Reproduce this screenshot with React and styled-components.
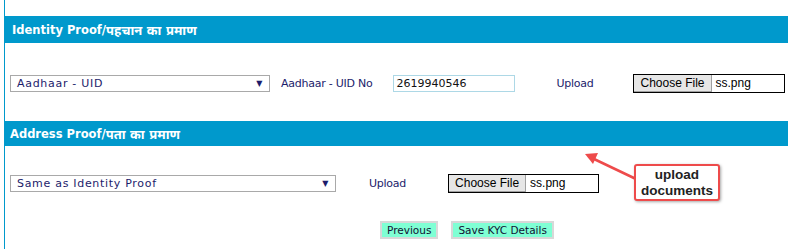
import React from "react";
import styled, { createGlobalStyle } from "styled-components";

const GlobalStyle = createGlobalStyle`
  html, body {
    margin: 0;
    padding: 0;
    background: #fff;
  }
  body {
    font-family: "DejaVu Sans", "Noto Sans", sans-serif;
  }
`;

const Page = styled.div`
  position: relative;
  width: 788px;
  height: 249px;
  overflow: hidden;
`;

const Panel = styled.div`
  margin-left: 4px;
  border-left: 1px solid #0099cc;
  height: 249px;
  padding-top: 16px;
  box-sizing: border-box;
`;

const Header = styled.div`
  background: #0099cc;
  height: ${(p) => p.h}px;
  display: flex;
  align-items: center;
  padding-left: ${(p) => p.pl}px;
  color: #fff;
  font-weight: bold;
  font-size: 11.5px;
  font-family: "DejaVu Sans", "Noto Sans", "Noto Sans Devanagari", sans-serif;
  white-space: nowrap;
`;

const Hindi = styled.span`
  font-size: 13px;
`;

const Row = styled.div`
  display: flex;
  align-items: center;
  height: ${(p) => p.h}px;
  padding-left: 5px;
  padding-top: ${(p) => p.pt || 0}px;
  box-sizing: border-box;
  white-space: nowrap;
`;

const Select = styled.div`
  flex-shrink: 0;
  width: ${(p) => p.w}px;
  height: 17px;
  box-sizing: border-box;
  border: 1px solid #a9a9a9;
  display: flex;
  align-items: center;
  justify-content: space-between;
  padding: 0 6px 0 6px;
  font-size: 11px;
  color: #1c1c6b;
  letter-spacing: 0.7px;
`;

const Arrow = styled.span`
  font-size: 8px;
  color: #1c1c6b;
`;

const Label = styled.span`
  flex-shrink: 0;
  margin-left: ${(p) => p.ml}px;
  font-size: 11px;
  color: #1c1c6b;
  letter-spacing: -0.25px;
`;

const TextInput = styled.div`
  flex-shrink: 0;
  margin-left: ${(p) => p.ml}px;
  width: 122px;
  height: 17px;
  box-sizing: border-box;
  border: 1px solid #add8e6;
  padding-left: 2px;
  font-size: 11px;
  line-height: 15px;
  color: #111;
`;

const FileBox = styled.div`
  flex-shrink: 0;
  margin-left: ${(p) => p.ml}px;
  width: ${(p) => p.w}px;
  height: 19px;
  box-sizing: border-box;
  border: 1px solid #000;
  display: flex;
  align-items: stretch;
  font-family: "Liberation Sans", Arial, sans-serif;
  font-size: 12px;
  color: #000;
`;

const FileButton = styled.div`
  background: #e6e6e6;
  border-right: 1px solid #a0a0a0;
  border-bottom: 1px solid #a0a0a0;
  padding: 0 6px;
  display: flex;
  align-items: center;
`;

const FileName = styled.span`
  display: flex;
  align-items: center;
  padding-left: 4px;
`;

const Actions = styled.div`
  display: flex;
  justify-content: flex-start;
  padding-left: 375px;
  gap: 13px;
  margin-top: 3px;
`;

const Button = styled.button`
  background: #7fffd4;
  border: 2px solid #d8d8d8;
  height: 18px;
  padding: 0 5px;
  font-family: "DejaVu Sans", sans-serif;
  font-size: 10.5px;
  color: #111133;
  cursor: pointer;
`;

const Callout = styled.div`
  position: absolute;
  left: 634px;
  top: 164px;
  width: 86px;
  height: 37px;
  box-sizing: border-box;
  border: 2px solid #ee4b4b;
  border-radius: 3px;
  background: #fff;
  box-shadow: 1px 1px 3px rgba(0, 0, 0, 0.35);
  font-family: "Liberation Sans", Arial, sans-serif;
  font-weight: bold;
  font-size: 13.5px;
  line-height: 16px;
  color: #222;
  text-align: center;
  display: flex;
  align-items: center;
  justify-content: center;
`;

const ArrowSvg = styled.svg`
  position: absolute;
  left: 580px;
  top: 148px;
`;

function FileField({ ml, w }) {
  return (
    <FileBox ml={ml} w={w}>
      <FileButton>Choose File</FileButton>
      <FileName>ss.png</FileName>
    </FileBox>
  );
}

export default function App() {
  return (
    <Page>
      <GlobalStyle />
      <Panel>
        <Header h={27} pl={7}>
          Identity Proof/<Hindi>पहचान का प्रमाण</Hindi>
        </Header>
        <Row h={78} pt={2}>
          <Select w={260}>
            Aadhaar - UID <Arrow>▼</Arrow>
          </Select>
          <Label ml={11}>Aadhaar - UID No</Label>
          <TextInput ml={21}>2619940546</TextInput>
          <Label ml={41}>Upload</Label>
          <FileField ml={40} w={152} />
        </Row>
        <Header h={25} pl={5}>
          Address Proof/<Hindi>पता का प्रमाण</Hindi>
        </Header>
        <Row h={72} pt={2}>
          <Select w={326}>
            Same as Identity Proof <Arrow>▼</Arrow>
          </Select>
          <Label ml={33}>Upload</Label>
          <FileField ml={42} w={151} />
        </Row>
        <Actions>
          <Button>Previous</Button>
          <Button>Save KYC Details</Button>
        </Actions>
      </Panel>
      <ArrowSvg width="60" height="40" viewBox="0 0 60 40">
        <line x1="14" y1="11" x2="56" y2="31" stroke="#ee4b4b" strokeWidth="2.5" strokeLinecap="round" />
        <polygon points="5,6 18,5 13,16" fill="#ee4b4b" />
      </ArrowSvg>
      <Callout>
        upload
        <br />
        documents
      </Callout>
    </Page>
  );
}
